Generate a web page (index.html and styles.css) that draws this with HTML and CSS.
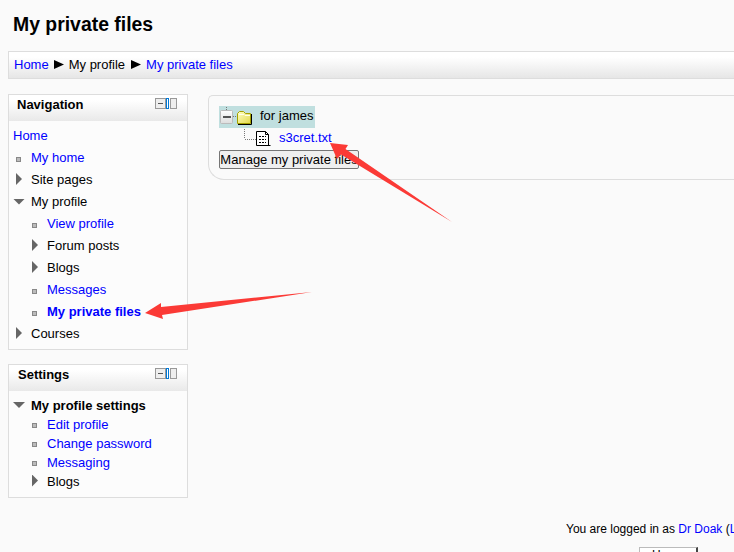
FILE: index.html
```html
<!DOCTYPE html>
<html lang="en">
<head>
<meta charset="utf-8">
<title>My private files</title>
<link rel="stylesheet" href="styles.css">
</head>
<body>
<h1>My private files</h1>
<nav class="breadcrumb">
  <a>Home</a><svg width="10" height="10"><path d="M0 0 10 4.500 0 9z"/></svg><span>My profile</span><svg width="10" height="10"><path d="M0 0 10 4.500 0 9z"/></svg><a>My private files</a>
</nav>
<main class="columns">
  <aside>
    <section class="block navigation">
      <header><h2>Navigation</h2><svg class="controls" width="22" height="11" shape-rendering="crispEdges"><path d="M.5.5h10v10H.5zM15.5.5h6v10h-6z" fill="#eee" stroke="#999"/><path d="M3 5.5h5" stroke="#555"/><path d="M11.5.5h2v10h-2z" fill="#fff" stroke="#0078d7"/></svg></header>
      <ul>
        <li class="root"><a>Home</a></li>
        <li class="leaf"><a>My home</a></li>
        <li class="closed">Site pages</li>
        <li class="open">My profile</li>
        <li class="leaf deep"><a>View profile</a></li>
        <li class="closed deep">Forum posts</li>
        <li class="closed deep">Blogs</li>
        <li class="leaf deep"><a>Messages</a></li>
        <li class="leaf deep"><a class="current">My private files</a></li>
        <li class="closed">Courses</li>
      </ul>
    </section>
    <section class="block settings">
      <header><h2>Settings</h2><svg class="controls" width="22" height="11" shape-rendering="crispEdges"><path d="M.5.5h10v10H.5zM15.5.5h6v10h-6z" fill="#eee" stroke="#999"/><path d="M3 5.5h5" stroke="#555"/><path d="M11.5.5h2v10h-2z" fill="#fff" stroke="#0078d7"/></svg></header>
      <ul>
        <li class="open"><b>My profile settings</b></li>
        <li class="leaf deep"><a>Edit profile</a></li>
        <li class="leaf deep"><a>Change password</a></li>
        <li class="leaf deep"><a>Messaging</a></li>
        <li class="closed deep">Blogs</li>
      </ul>
    </section>
  </aside>
  <section class="files">
    <div class="folder">
      <svg width="36" height="22">
        <defs><linearGradient id="toggle" x2="0" y2="1"><stop stop-color="#fff"/><stop offset="1" stop-color="#ddd"/></linearGradient><linearGradient id="folder" x2="1" y2="1"><stop stop-color="#ffffc4"/><stop offset="1" stop-color="#e2d84b"/></linearGradient></defs>
        <path d="M7.500 1v4M14 10.500h5" stroke="#777" stroke-dasharray="1 1"/>
        <rect x="1.500" y="4.500" width="12" height="13" rx="1" fill="url(#toggle)" stroke="#bbb"/>
        <path d="M4 11h8" stroke="#555" stroke-width="2"/>
        <path d="M18.500 17.500v-10l2-2h4l2 2h5v10z" fill="url(#folder)" stroke="#a5a000"/>
        <path d="M20 8.500h5l1 1h5" fill="none" stroke="#ffffe8"/>
        <path d="M19 18.500h13.500V8" fill="none" stroke="#000"/>
      </svg><span>for james</span>
    </div>
    <div class="file">
      <svg width="54" height="22">
        <path d="M25.500 1v10M26 11.500h11" fill="none" stroke="#777" stroke-dasharray="1 1"/>
        <path d="M37.500 3.500h9l3 3v11h2M37.500 3.500v14h13" fill="#fff" stroke="#000"/>
        <path d="M46.500 3.500v3h3" fill="none" stroke="#000"/>
        <path d="M40 8.500h7M40 11.500h7M40 14.500h7" stroke="#000" stroke-dasharray="2 1"/>
      </svg><a>s3cret.txt</a>
    </div>
    <button>Manage my private files</button>
  </section>
</main>
<footer><p>You are logged in as <a>Dr Doak</a> (<a>Logout</a>)</p><button>Home</button></footer>
<svg class="annotations" width="734" height="552" fill="#fb3a36"><path d="M330 143 348 145 345.500 149 452 222 341 154.500 337 159z"/><path d="M145 313 161 303 161 307 312 292 162 315 163 319z"/></svg>
</body>
</html>
```
FILE: styles.css
```css
*, *::before { box-sizing: border-box; }
body {
  margin: 0;
  padding: 0 0 0 8px;
  height: 552px;
  overflow: hidden;
  background: #fafafa;
  color: #000;
  font: 13px/22px "Liberation Sans", Arial, sans-serif;
}
a { color: #00f; }
h1 { margin: 0; padding: 12px 0 0 5px; height: 51px; font-size: 19.4px; line-height: 24px; }
.breadcrumb {
  display: flex;
  align-items: center;
  gap: 5px;
  width: 726px;
  height: 28px;
  padding: 0 5px;
  border: 1px solid #ddd;
  border-right: 0;
  background: linear-gradient(#fff 20%, #e6e6e6);
}
.breadcrumb span { margin-right: 1px; }
.columns { display: flex; gap: 20px; width: 726px; height: 435px; padding-top: 15px; }
aside { display: flex; flex-direction: column; gap: 14px; width: 180px; flex: none; }
.block { border: 1px solid #ddd; background: #fcfcfc; }
.navigation { height: 256px; }
.settings { height: 134px; }
.block header {
  display: flex;
  justify-content: space-between;
  height: 26px;
  padding: 3px 10px 0 8px;
  background: linear-gradient(#fff 20%, #e9e9e9);
}
h2 { margin: -1px 0 0; font-size: 13px; line-height: 15px; }
.settings h2 { padding-left: 1px; }
ul { list-style: none; margin: 0; padding: 4px 0 0; }
li { display: flex; align-items: center; height: 22px; padding-left: 4px; }
li::before { content: ""; flex: none; }
li.root::before { display: none; }
.settings ul { padding-top: 5px; }
.settings li { height: 19px; }
.deep { padding-left: 20px; }
.leaf::before {
  width: 5px;
  height: 5px;
  margin: 2px 10px 0 3px;
  border: 1px solid #888;
  background: #bbb;
}
.closed::before {
  width: 6px;
  height: 12px;
  margin: 0 9px 2px 3px;
  background: #666;
  clip-path: polygon(0 0, 100% 50%, 0 100%);
}
.open::before {
  width: 12px;
  height: 6px;
  margin: 0 6px 1px 0;
  background: #666;
  clip-path: polygon(0 0, 100% 0, 50% 100%);
}
.current { font-weight: bold; }
.files {
  flex: 1;
  height: 85px;
  margin-top: 1px;
  padding: 10px;
  border: 1px solid #ddd;
  border-right: 0;
  border-radius: 5px 0 0 16px;
}
.folder, .file { display: flex; height: 22px; line-height: 20px; }
.folder { width: 96px; background: #c0dfdf; white-space: nowrap; }
.folder span { margin-left: 5px; }
.file a { margin-left: 6px; }
button {
  display: block;
  padding: 0;
  border: 1px solid #767676;
  border-radius: 2px;
  background: #efefef;
  color: #000;
  font: 13px/17px "Liberation Sans", Arial, sans-serif;
}
.files button { width: 140px; height: 19px; white-space: nowrap; }
footer { width: 726px; padding-left: 558px; font-size: 12px; }
footer p { margin: 0; padding-top: 4px; height: 33px; line-height: 22px; white-space: nowrap; }
footer button {
  width: 59px;
  height: 22px;
  margin-left: 73px;
  border: 1px solid #bbb;
  border-right: 2px solid #444;
  border-radius: 0;
  background: #fff;
  font-size: 12px;
}
footer button { line-height: 14px; padding-bottom: 6px; }
.annotations { position: absolute; top: 0; left: 0; }
```
